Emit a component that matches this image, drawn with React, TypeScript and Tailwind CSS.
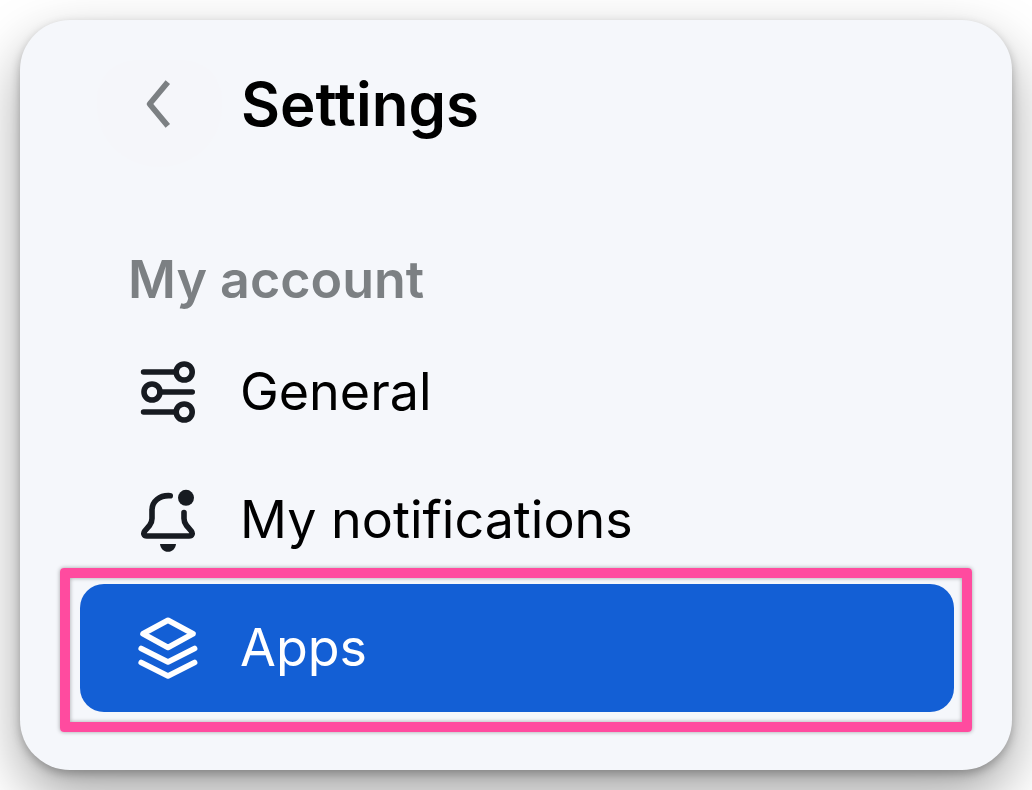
import type { ReactNode } from "react";

function BackIcon() {
  return (
    <svg viewBox="0 0 64 64" className="size-16" fill="none" stroke="#7c8083" strokeWidth="5.8" strokeLinejoin="round">
      <path d="M39.8 10.2 21.600 32l18.200 21.800" />
    </svg>
  );
}

function SlidersIcon() {
  return (
    <svg viewBox="0 0 64 64" className="size-16" fill="none" stroke="currentColor" strokeWidth="5.6" strokeLinecap="round">
      <circle cx="48.2" cy="12" r="8" />
      <circle cx="16" cy="32" r="8" />
      <circle cx="48.2" cy="52" r="8" />
      <path d="M7.6 12H40M24 32h32.2M7.6 52H40" />
    </svg>
  );
}

function BellIcon() {
  return (
    <svg viewBox="0 0 64 64" className="size-16" fill="none" stroke="currentColor" strokeWidth="5.6" strokeLinecap="round" strokeLinejoin="round">
      <path d="M34.2 7.7C23.5 7 16 13.5 16 22v8.5c0 3-.7 4.6-2.4 6.9L8.8 43c-2 2.600-.8 5 2 5h42.400c2.800 0 4-2.400 2-5l-4.800-5.600C48.700 35.100 48 33.500 48 30.500v-6" />
      <circle cx="50" cy="9.800" r="8" fill="currentColor" stroke="none" />
      <path d="M24 56h16c-.6 4.800-3.700 7.800-8 7.800s-7.400-3-8-7.800Z" fill="currentColor" stroke="none" />
    </svg>
  );
}

function LayersIcon() {
  return (
    <svg viewBox="0 0 64 64" className="size-16" fill="none" stroke="currentColor" strokeWidth="5.6" strokeLinecap="round" strokeLinejoin="round">
      <path d="M32 4.200 57 17.800 32 31.500 7 17.800Z" />
      <path d="M5.200 32.500 32 46l26.600-13.500M5.200 46.500 32 60l26.600-13.500" />
    </svg>
  );
}

function Item({ icon, label, active = false }: { icon: ReactNode; label: string; active?: boolean }) {
  return (
    <li
      className={
        active
          ? "flex h-32 items-center gap-10 rounded-3xl bg-[#135fd5] pl-14 text-white"
          : "flex h-32 items-center gap-10 pl-14 text-[#171b21]"
      }
    >
      {icon}
      <span className={active ? "text-[52px] leading-none" : "text-[52px] leading-none text-black"}>{label}</span>
    </li>
  );
}

export default function App() {
  return (
    <div className="h-[790px] w-[1032px] overflow-hidden bg-white p-5 font-['Inter',sans-serif]">
      <main className="relative h-[750px] w-[992px] rounded-[50px] bg-[#f5f7fb] pt-10 pr-[58px] pl-[60px] shadow-[0_25px_56px_rgba(0,0,0,0.36),0_4px_10px_rgba(0,0,0,0.25)]">
        <header className="flex items-start pl-[17px]">
          <button aria-label="Back" className="flex h-[107px] w-[125px] justify-center rounded-t-[40px] rounded-b-[62px] bg-[#f5f6fa] pt-3">
            <BackIcon />
          </button>
          <h1 className="pt-[14px] pl-[19px] text-[60px] leading-none font-semibold text-black">Settings</h1>
        </header>
        <nav>
          <h2 className="flex h-[161px] items-end pb-[22px] pl-12 text-[52px] leading-none font-semibold text-[#7c8083]">My account</h2>
          <ul>
            <Item icon={<SlidersIcon />} label="General" />
            <Item icon={<BellIcon />} label="My notifications" />
            <Item icon={<LayersIcon />} label="Apps" active />
          </ul>
        </nav>
        <div className="pointer-events-none absolute top-[548px] left-10 h-[164px] w-[912px] rounded-[4px] border-10 border-[#ff4b9f] shadow-[0_0_4px_rgba(0,0,0,0.35)]">
          <div className="size-full shadow-[inset_0_0_4px_rgba(0,0,0,0.35)]" />
        </div>
      </main>
    </div>
  );
}
